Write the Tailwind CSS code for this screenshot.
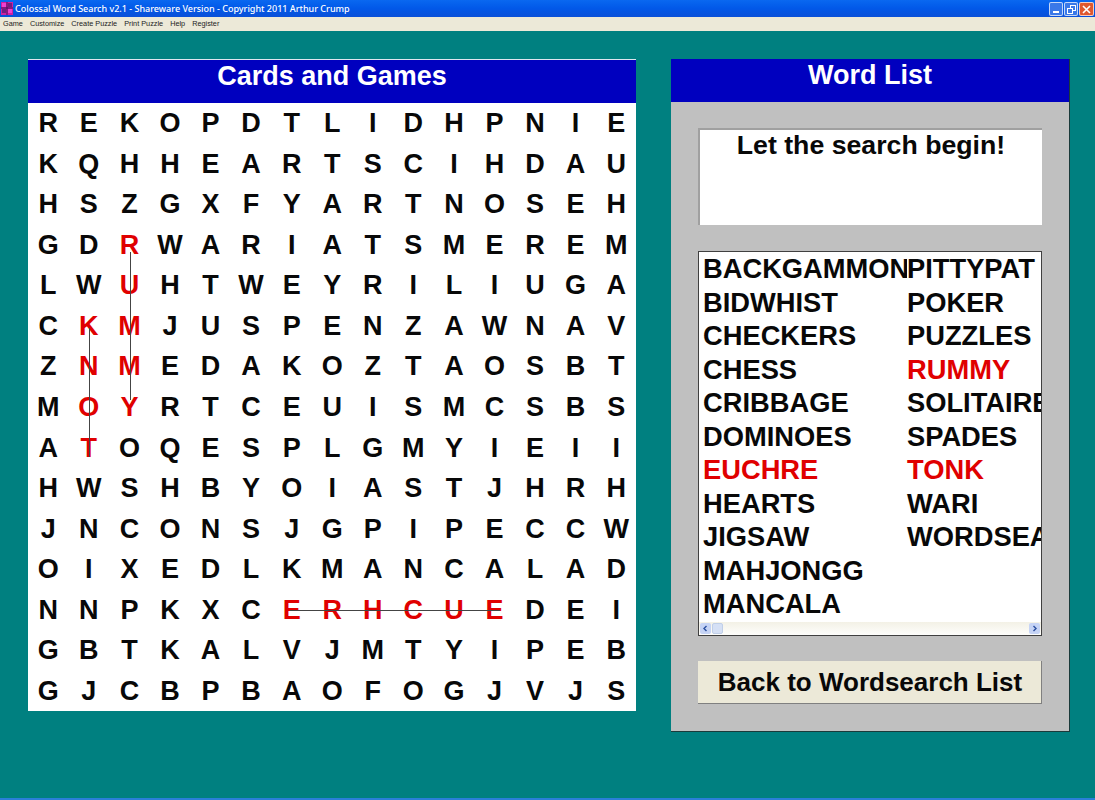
<!DOCTYPE html>
<html>
<head>
<meta charset="utf-8">
<script src="https://cdn.jsdelivr.net/npm/@tailwindcss/browser@4"></script>
</head>
<body class="m-0 w-[1095px] h-[800px] overflow-hidden bg-[#008080] font-['Liberation_Sans',Arial,sans-serif]">
<div class="flex flex-col h-[800px]">
  <!-- Title bar -->
  <div class="h-[17px] shrink-0 flex items-center justify-between pl-[1px] pr-[1px] bg-gradient-to-b from-[#0a68f0] via-[#0258e8] to-[#0a50d8]">
    <div class="flex items-center gap-[2px]">
      <svg width="12" height="13" viewBox="0 0 12 13"><rect width="12" height="13" fill="#d020a0"/><rect x="1" y="1" width="4" height="4" fill="#f040d0"/><rect x="7" y="1" width="4" height="4" fill="#702080"/><rect x="1" y="7" width="4" height="4" fill="#702080"/><rect x="7" y="7" width="4" height="4" fill="#f040d0"/><path d="M0 6h12M6 0v13" stroke="#401060" stroke-width="1"/></svg>
      <span class="text-white text-[9px] font-medium font-['Noto_Sans',sans-serif] leading-none whitespace-nowrap">Colossal Word Search v2.1 - Shareware Version - Copyright 2011 Arthur Crump</span>
    </div>
    <div class="flex items-center gap-[1px] pt-[1px]">
      <div class="w-[14px] h-[14px] rounded-[2px] border border-white/70 bg-[#3a78e8] flex items-end justify-center pb-[2px]"><div class="w-[6px] h-[2px] bg-white"></div></div>
      <div class="w-[14px] h-[14px] rounded-[2px] border border-white/70 bg-[#3a78e8] flex items-center justify-center"><svg width="9" height="9" viewBox="0 0 9 9" fill="none" stroke="#fff"><rect x="3.500" y="0.500" width="5" height="5"/><rect x="0.500" y="3.500" width="5" height="5" fill="#3a78e8"/></svg></div>
      <div class="w-[15px] h-[14px] rounded-[2px] border border-white/70 bg-[#e0582f] flex items-center justify-center"><svg width="9" height="9" viewBox="0 0 9 9" stroke="#fff" stroke-width="1.600"><path d="M1 1l7 7M8 1l-7 7"/></svg></div>
    </div>
  </div>
  <!-- Menu -->
  <div class="h-[14px] shrink-0 bg-[#ece9d8] flex items-center gap-[7px] pl-[3px] text-[7.300px] leading-none text-[#222]">
    <span>Game</span><span>Customize</span><span>Create Puzzle</span><span>Print Puzzle</span><span>Help</span><span>Register</span>
  </div>
  <!-- Work area -->
  <div class="flex-1 flex items-start pl-[28px] pt-[28px] gap-[35px]">
    <!-- Puzzle -->
    <div class="relative w-[608px] shrink-0 bg-white border-t border-[#dfe6f0]">
      <div class="h-[43px] bg-[#0000bf] text-white font-bold text-[27px] leading-[32px] text-center">Cards and Games</div>
      <div class="grid grid-cols-[repeat(15,40.57px)] auto-rows-[40.57px] text-[#080808] font-bold text-[27px] text-center leading-[40px]">
        <span>R</span><span>E</span><span>K</span><span>O</span><span>P</span><span>D</span><span>T</span><span>L</span><span>I</span><span>D</span><span>H</span><span>P</span><span>N</span><span>I</span><span>E</span>
        <span>K</span><span>Q</span><span>H</span><span>H</span><span>E</span><span>A</span><span>R</span><span>T</span><span>S</span><span>C</span><span>I</span><span>H</span><span>D</span><span>A</span><span>U</span>
        <span>H</span><span>S</span><span>Z</span><span>G</span><span>X</span><span>F</span><span>Y</span><span>A</span><span>R</span><span>T</span><span>N</span><span>O</span><span>S</span><span>E</span><span>H</span>
        <span>G</span><span>D</span><span class="text-[#e00000]">R</span><span>W</span><span>A</span><span>R</span><span>I</span><span>A</span><span>T</span><span>S</span><span>M</span><span>E</span><span>R</span><span>E</span><span>M</span>
        <span>L</span><span>W</span><span class="text-[#e00000]">U</span><span>H</span><span>T</span><span>W</span><span>E</span><span>Y</span><span>R</span><span>I</span><span>L</span><span>I</span><span>U</span><span>G</span><span>A</span>
        <span>C</span><span class="text-[#e00000]">K</span><span class="text-[#e00000]">M</span><span>J</span><span>U</span><span>S</span><span>P</span><span>E</span><span>N</span><span>Z</span><span>A</span><span>W</span><span>N</span><span>A</span><span>V</span>
        <span>Z</span><span class="text-[#e00000]">N</span><span class="text-[#e00000]">M</span><span>E</span><span>D</span><span>A</span><span>K</span><span>O</span><span>Z</span><span>T</span><span>A</span><span>O</span><span>S</span><span>B</span><span>T</span>
        <span>M</span><span class="text-[#e00000]">O</span><span class="text-[#e00000]">Y</span><span>R</span><span>T</span><span>C</span><span>E</span><span>U</span><span>I</span><span>S</span><span>M</span><span>C</span><span>S</span><span>B</span><span>S</span>
        <span>A</span><span class="text-[#e00000]">T</span><span>O</span><span>Q</span><span>E</span><span>S</span><span>P</span><span>L</span><span>G</span><span>M</span><span>Y</span><span>I</span><span>E</span><span>I</span><span>I</span>
        <span>H</span><span>W</span><span>S</span><span>H</span><span>B</span><span>Y</span><span>O</span><span>I</span><span>A</span><span>S</span><span>T</span><span>J</span><span>H</span><span>R</span><span>H</span>
        <span>J</span><span>N</span><span>C</span><span>O</span><span>N</span><span>S</span><span>J</span><span>G</span><span>P</span><span>I</span><span>P</span><span>E</span><span>C</span><span>C</span><span>W</span>
        <span>O</span><span>I</span><span>X</span><span>E</span><span>D</span><span>L</span><span>K</span><span>M</span><span>A</span><span>N</span><span>C</span><span>A</span><span>L</span><span>A</span><span>D</span>
        <span>N</span><span>N</span><span>P</span><span>K</span><span>X</span><span>C</span><span class="text-[#e00000]">E</span><span class="text-[#e00000]">R</span><span class="text-[#e00000]">H</span><span class="text-[#e00000]">C</span><span class="text-[#e00000]">U</span><span class="text-[#e00000]">E</span><span>D</span><span>E</span><span>I</span>
        <span>G</span><span>B</span><span>T</span><span>K</span><span>A</span><span>L</span><span>V</span><span>J</span><span>M</span><span>T</span><span>Y</span><span>I</span><span>P</span><span>E</span><span>B</span>
        <span>G</span><span>J</span><span>C</span><span>B</span><span>P</span><span>B</span><span>A</span><span>O</span><span>F</span><span>O</span><span>G</span><span>J</span><span>V</span><span>J</span><span>S</span>
      </div>
      <svg class="absolute left-0 top-0 pointer-events-none" width="608" height="652" viewBox="0 0 608 652" fill="none" stroke="#444" stroke-width="1">
        <path d="M102.500 192V340"/>
        <path d="M61.500 268V397"/>
        <path d="M262 550.500H472"/>
      </svg>
    </div>
    <!-- Word list -->
    <div class="w-[399px] h-[673px] shrink-0 bg-[#c0c0c0] border-r border-b border-[#1a3a3a] flex flex-col">
      <div class="h-[43px] shrink-0 bg-[#0000bf] text-white font-bold text-[27px] leading-[33px] text-center">Word List</div>
      <div class="flex flex-col pl-[27px] pr-[27px] pt-[26px]">
        <div class="h-[97px] bg-white border-t-2 border-l-2 border-[#a0a0a0] text-[#080808] font-bold text-[26.700px] leading-[30px] text-center">Let the search begin!</div>
        <div class="mt-[26px] h-[385px] bg-white border border-[#404040] flex flex-col overflow-hidden">
          <div class="flex-1 flex pl-[4px] text-[#080808] font-bold text-[27.300px] leading-[33.500px] overflow-hidden">
            <div class="w-[204px] shrink-0 overflow-hidden whitespace-nowrap">
              <div>BACKGAMMON</div><div>BIDWHIST</div><div>CHECKERS</div><div>CHESS</div><div>CRIBBAGE</div><div>DOMINOES</div><div class="text-[#e00000]">EUCHRE</div><div>HEARTS</div><div>JIGSAW</div><div>MAHJONGG</div><div>MANCALA</div>
            </div>
            <div class="whitespace-nowrap">
              <div>PITTYPAT</div><div>POKER</div><div>PUZZLES</div><div class="text-[#e00000]">RUMMY</div><div>SOLITAIRE</div><div>SPADES</div><div class="text-[#e00000]">TONK</div><div>WARI</div><div>WORDSEARCH</div>
            </div>
          </div>
          <div class="h-[13px] shrink-0 bg-gradient-to-b from-[#f3f1e6] to-[#fefefc] flex items-center justify-between px-[1px]">
            <div class="flex gap-[1px]">
              <div class="w-[11px] h-[11px] rounded-[2px] bg-[#c6d4f5] flex items-center justify-center"><svg width="7" height="7" viewBox="0 0 7 7" fill="none" stroke="#2a4fa0" stroke-width="1.400"><path d="M4.500 1L2 3.500L4.500 6"/></svg></div>
              <div class="w-[11px] h-[11px] rounded-[2px] bg-[#d5e0f5] border border-[#c0cfe8]"></div>
            </div>
            <div class="w-[11px] h-[11px] rounded-[2px] bg-[#c6d4f5] flex items-center justify-center"><svg width="7" height="7" viewBox="0 0 7 7" fill="none" stroke="#2a4fa0" stroke-width="1.400"><path d="M2.500 1L5 3.500L2.500 6"/></svg></div>
          </div>
        </div>
        <div class="mt-[25px] h-[43px] w-[344px] bg-[#ece9d8] border-r border-b border-[#808080] text-[#080808] font-bold text-[26px] leading-[42px] text-center pl-[1px]">Back to Wordsearch List</div>
      </div>
    </div>
  </div>
  <div class="h-[2px] shrink-0 bg-[#2a7fd8]"></div>
</div>
</body>
</html>
